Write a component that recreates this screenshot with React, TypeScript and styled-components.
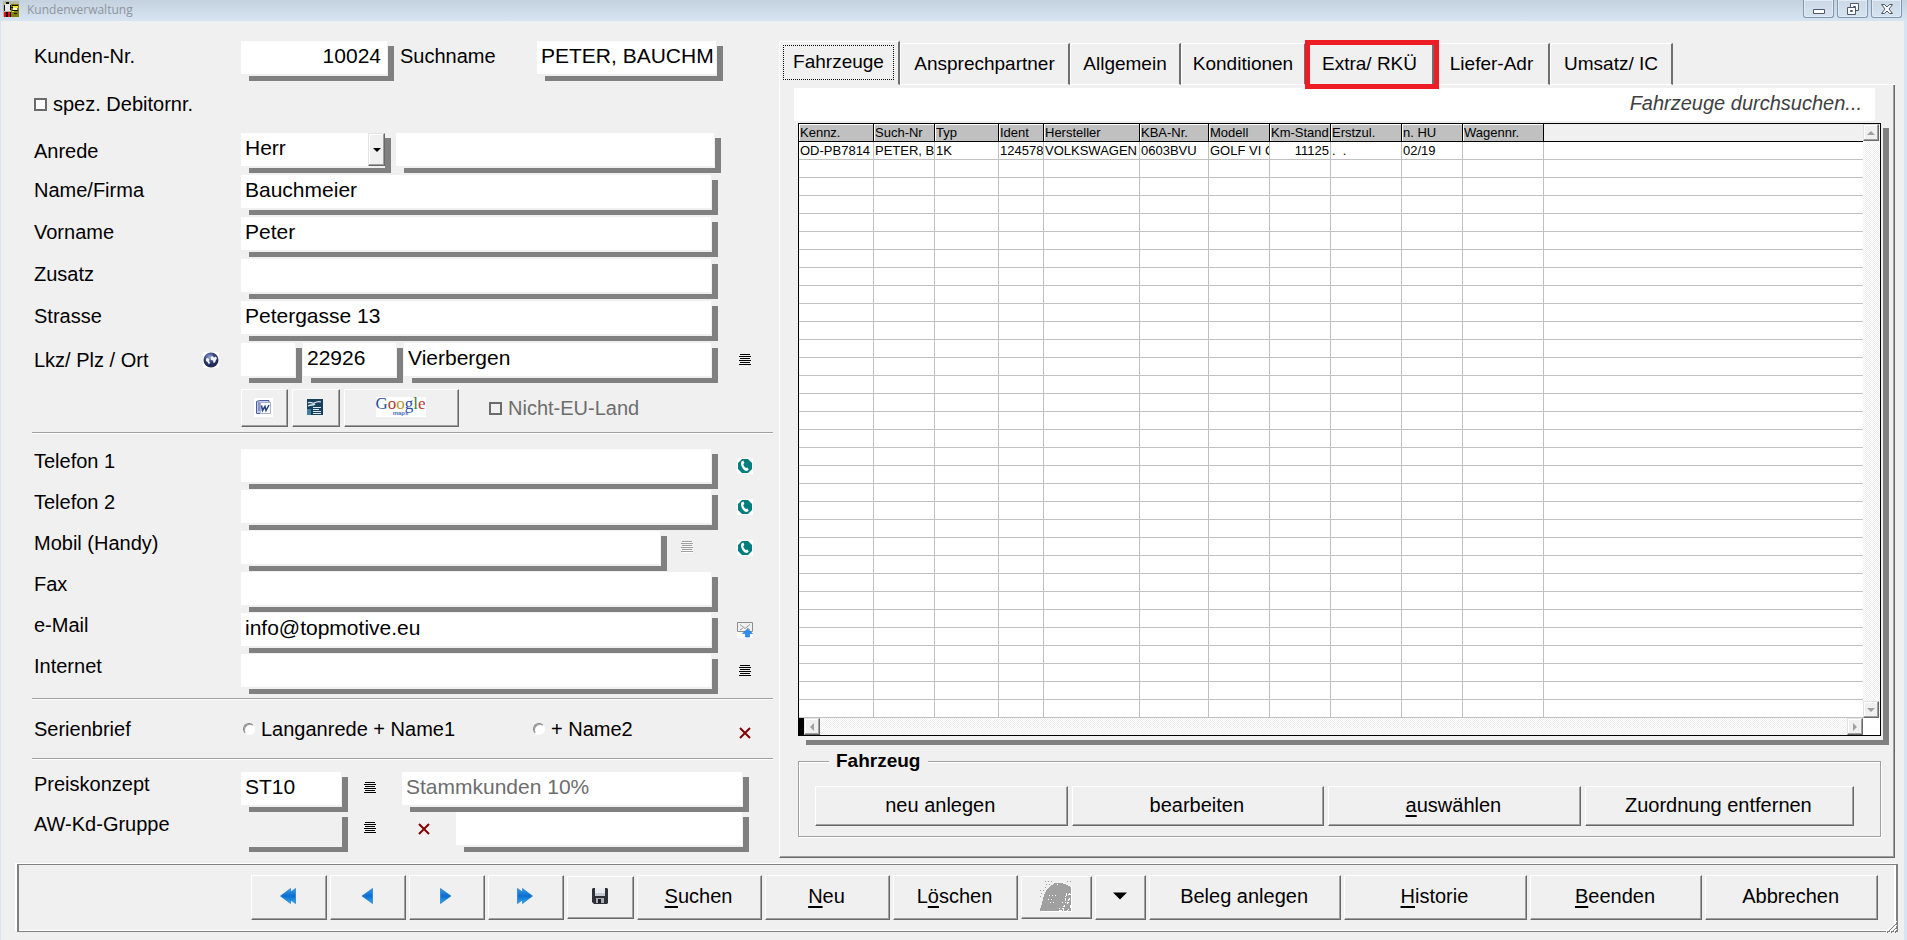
import React from "react";
import styled, { createGlobalStyle, css } from "styled-components";

const FACE = "#f0f0f0";
const SHADOW = "#808080";

const GlobalStyle = createGlobalStyle`
  * { box-sizing: border-box; }
  body {
    margin: 0;
    background: ${FACE};
    color: #000;
    font-family: "Liberation Sans", Arial, sans-serif;
    font-size: 20px;
    line-height: 24px;
  }
  button, input, select { font-family: inherit; color: inherit; margin: 0; border-radius: 0; }
  svg { display: block; flex: none; }
`;

/* ---------- window frame ---------- */

const Window = styled.div`
  display: flex;
  flex-direction: column;
  min-height: 100vh;
  min-width: 1700px;
  background: ${FACE};
  border-left: 1px solid #d7e4f2;
  border-right: 3px solid #d7e4f2;
`;

const TitleBar = styled.header`
  display: flex;
  align-items: flex-start;
  height: 21px;
  margin: 0 -3px 0 -1px;
  padding: 0 5px 0 3px;
  background: linear-gradient(#c4d1de, #d7e4f2);
`;

const TitleText = styled.h1`
  flex: 1;
  margin: 0;
  padding-left: 8px;
  font: 12px/20px "Open Sans", "Noto Sans", sans-serif;
  color: #8f959c;
`;

const CaptionButtons = styled.div`
  display: flex;
  gap: 3px;
`;

const CaptionButton = styled.button`
  display: grid;
  place-items: center;
  width: 31px;
  height: 18px;
  padding: 0;
  border: 1px solid #8496ad;
  border-top: 0;
  border-radius: 0 0 3px 3px;
  background: linear-gradient(#cbd8e6, #d5e2f0);
  box-shadow: inset 0 0 0 1px #e2ecf6;
`;

const Main = styled.main`
  display: flex;
  padding: 20px 9px 0 31px;
`;

/* ---------- shared controls ---------- */

const FieldBox = styled.div<{ $w?: number }>`
  position: relative;
  flex: none;
  width: ${(p) => (p.$w ? `${p.$w}px` : "100%")};
  height: 40px;
  padding: 0 7px 7px 0;
  background:
    linear-gradient(${SHADOW}, ${SHADOW}) right bottom / 6px calc(100% - 5px) no-repeat,
    linear-gradient(${SHADOW}, ${SHADOW}) right bottom / calc(100% - 8px) 5px no-repeat;
`;

const controlText = css`
  display: block;
  width: 100%;
  height: 33px;
  padding: 0 3px 4px 4px;
  border: 0;
  outline: 0;
  background: #fff;
  font-size: 21px;
`;

const TextInput = styled.input<{ $right?: boolean; $flat?: boolean }>`
  ${controlText}
  text-align: ${(p) => (p.$right ? "right" : "left")};
  ${(p) => p.$flat && `background: ${FACE};`}
  ${(p) => p.$right && "padding-right: 6px;"}
  &:disabled { color: #6d6d6d; }
`;

const SelectInput = styled.select`
  ${controlText}
  appearance: none;
`;

const SelectArrow = styled.span`
  position: absolute;
  top: 0;
  right: 6px;
  display: grid;
  place-items: center;
  width: 17px;
  height: 33px;
  background: ${FACE};
  border: 1px solid;
  border-color: #e3e3e3 #696969 #696969 #e3e3e3;
  box-shadow: inset -1px -1px #a0a0a0, inset 1px 1px #fff;
  pointer-events: none;
`;

const PushButton = styled.button<{ $w?: number; $grow?: number; $h?: number }>`
  display: flex;
  align-items: center;
  justify-content: center;
  height: ${(p) => p.$h ?? 45}px;
  padding: 0 2px 2px 0;
  ${(p) => (p.$grow ? `flex: ${p.$grow} 1 0;` : `flex: none; width: ${p.$w}px;`)}
  border: 1px solid;
  border-color: #fff #696969 #696969 #fff;
  background: ${FACE};
  box-shadow: inset -1px -1px #a0a0a0;
  font-size: 20px;
  line-height: 24px;
  white-space: pre;
  u { text-underline-offset: 3px; }
`;

const IconButton = styled.button`
  display: grid;
  place-items: center;
  padding: 0;
  border: 0;
  background: none;
`;

/* ---------- customer form ---------- */

const FormPanel = styled.section`
  flex: none;
  width: 747px;
  padding-right: 6px;
`;

const Divider = styled.hr<{ $before?: number; $after?: number }>`
  height: 2px;
  margin: ${(p) => p.$before ?? 0}px 0 ${(p) => p.$after ?? 0}px;
  border: 0;
  border-top: 1px solid #a0a0a0;
  background: #fff;
`;

const Group = styled.div<{ $gap?: number }>`
  display: flex;
  flex-direction: column;
  gap: ${(p) => p.$gap ?? 0}px;
`;

const Row = styled.div<{ $drop?: number; $wide?: boolean }>`
  display: grid;
  grid-template-columns: ${(p) => (p.$wide ? "207px 1fr" : "207px 477px 54px")};
  align-items: start;
  padding-left: 2px;
  & > :first-child { padding-top: ${(p) => p.$drop ?? 0}px; }
`;

const LabelCell = styled.div`
  display: flex;
  align-items: center;
  justify-content: space-between;
  padding-right: 22px;
`;

const Controls = styled.div<{ $gap?: number }>`
  display: flex;
  align-items: flex-start;
  gap: ${(p) => p.$gap ?? 0}px;
`;

const Slot = styled.div<{ $w?: number; $h?: number; $after?: number }>`
  display: grid;
  place-items: center;
  flex: none;
  width: ${(p) => (p.$w ? `${p.$w}px` : "auto")};
  height: ${(p) => p.$h ?? 34}px;
  margin-right: ${(p) => p.$after ?? 0}px;
`;

const ClearSlot = styled(Slot)`
  align-self: end;
  height: 50px;
`;

const InlineLabel = styled.label`
  width: 143px;
  padding: 3px 0 0 6px;
`;

const CheckLabel = styled.label<{ $dim?: boolean }>`
  display: flex;
  align-items: center;
  gap: 6px;
  color: ${(p) => (p.$dim ? "#6d6d6d" : "inherit")};
`;

const CheckRow = styled.div`
  display: flex;
  align-items: center;
  height: 52px;
  padding: 0 0 6px 2px;
`;

const CheckBox = styled.input.attrs({ type: "checkbox" })`
  appearance: none;
  width: 13px;
  height: 13px;
  border: 2px solid #6b6b6b;
  background: #fff;
  &:disabled { background: ${FACE}; }
`;

const Radio = styled.input.attrs({ type: "radio" })`
  appearance: none;
  width: 12px;
  height: 12px;
  border: 1px solid;
  border-color: #808080 #fff #fff #808080;
  border-radius: 50%;
  background: #fff;
  box-shadow: inset 1px 1px #a0a0a0;
`;

const ToolRow = styled.div`
  display: flex;
  align-items: center;
  gap: 4px;
  padding: 6px 0 0 209px;
`;

const ToolCheck = styled.div`
  padding-left: 26px;
`;

const SerialRow = styled.div`
  display: grid;
  grid-template-columns: 209px 290px 185px 54px;
  align-items: center;
  height: 58px;
  padding-left: 2px;
`;

const GoogleMark = styled.span`
  display: flex;
  flex-direction: column;
  align-items: center;
  width: 50px;
  height: 20px;
  background: #fff;
  font: 17px/14px "Liberation Serif", serif;
`;

const Letter = styled.span<{ $c: string }>`
  color: ${(p) => p.$c};
`;

const MapsMark = styled.small`
  font: bold 6px/4px "Liberation Sans", sans-serif;
  color: #4a6fb5;
`;

/* ---------- vehicle tabs ---------- */

const TabArea = styled.section`
  flex: 1;
  min-width: 0;
`;

const TabList = styled.div`
  display: flex;
  align-items: flex-end;
  height: 44px;
`;

const Tab = styled.button<{ $w: number; $active?: boolean; $marked?: boolean }>`
  position: relative;
  width: ${(p) => p.$w}px;
  height: ${(p) => (p.$active ? 44 : 42)}px;
  padding: ${(p) => (p.$active ? "3px 4px 4px 3px" : "0")};
  border: 1px solid #fff;
  border-right: 2px solid #6f6f6f;
  border-bottom-color: ${(p) => (p.$active ? FACE : "#fff")};
  border-radius: 3px 0 0 0;
  background: ${FACE};
  font-size: 19px;
  line-height: 24px;
  white-space: nowrap;
  ${(p) =>
    p.$marked &&
    css`
      &::after {
        content: "";
        position: absolute;
        z-index: 1;
        inset: -4px -7px -5px -2px;
        border: 5px solid #ee1c24;
      }
    `}
`;

const FocusRing = styled.span`
  display: block;
  height: 35px;
  padding-top: 4px;
  border: 1px dotted #000;
`;

const TabFill = styled.div`
  flex: 1;
  border-bottom: 1px solid #fff;
`;

const TabBody = styled.div`
  padding: 3px 5px 20px 14px;
  border: 1px solid;
  border-width: 0 1px 1px;
  border-color: #fff #696969 #696969 #fff;
  box-shadow: inset -1px -1px #a0a0a0;
`;

const SearchInput = styled.input`
  display: block;
  width: calc(100% - 14px);
  height: 33px;
  padding: 0 13px 2px;
  border: 0;
  font-size: 20px;
  font-style: italic;
  text-align: right;
  &::placeholder { color: #404040; opacity: 1; }
`;

const GridShadow = styled.div`
  margin: 2px 0 0 4px;
  padding: 0 8px 9px 0;
  background:
    linear-gradient(${SHADOW}, ${SHADOW}) right bottom / 6px calc(100% - 5px) no-repeat,
    linear-gradient(${SHADOW}, ${SHADOW}) right bottom / calc(100% - 8px) 5px no-repeat;
`;

const GridFrame = styled.div`
  display: grid;
  grid-template-columns: minmax(0, 1fr) 17px;
  border: 1px solid #000;
  background: #fff;
`;

const DataTable = styled.table`
  width: 100%;
  table-layout: fixed;
  border-collapse: separate;
  border-spacing: 0;
  font-size: 13px;
  line-height: 17px;
`;

const HeadCell = styled.th<{ $blank?: boolean }>`
  height: 18px;
  padding: 0 1px;
  overflow: hidden;
  border-bottom: 1px solid #000;
  ${(p) =>
    p.$blank
      ? `background: ${FACE};`
      : "border-right: 1px solid #000; background: #c0c0c0; box-shadow: inset 1px 1px #fff;"}
  font-weight: 400;
  text-align: left;
  white-space: nowrap;
`;

const Cell = styled.td<{ $right?: boolean; $last?: boolean }>`
  height: 18px;
  padding: 0 1px;
  overflow: hidden;
  border-bottom: 1px solid #c0c0c0;
  ${(p) => !p.$last && "border-right: 1px solid #c0c0c0;"}
  text-align: ${(p) => (p.$right ? "right" : "left")};
  white-space: pre;
`;

const dither = css`
  background: repeating-conic-gradient(#fff 0 25%, #efefef 0 50%) 0 0 / 2px 2px;
`;

const VScroll = styled.div`
  display: flex;
  flex-direction: column;
  justify-content: space-between;
  padding-right: 1px;
  ${dither}
`;

const HScroll = styled.div`
  display: flex;
  justify-content: space-between;
  height: 17px;
  border-left: 5px solid #000;
  ${dither}
`;

const ScrollButton = styled.button`
  display: grid;
  place-items: center;
  width: 16px;
  height: 17px;
  padding: 0;
  border: 1px solid;
  border-color: #e3e3e3 #696969 #696969 #e3e3e3;
  background: ${FACE};
  box-shadow: inset -1px -1px #a0a0a0, inset 1px 1px #fff;
`;

const VehicleActions = styled.fieldset`
  display: flex;
  gap: 4px;
  margin: 4px 8px 0 4px;
  padding: 13px 26px 10px 16px;
  border: 1px solid #a0a0a0;
  box-shadow: 1px 1px #fff, inset 1px 1px #fff;
  min-width: 0;
`;

const ActionsLegend = styled.legend`
  margin-left: 14px;
  padding: 0 8px 0 7px;
  background: ${FACE};
  font-size: 19px;
  font-weight: 700;
`;

/* ---------- command bar ---------- */

const CommandBar = styled.footer`
  position: relative;
  display: flex;
  align-items: center;
  gap: 3px;
  margin: 6px 6px 8px 16px;
  height: 68px;
  padding: 0 18px 2px 232px;
  border: 1px solid #808080;
  border-width: 1px 2px;
  box-shadow: -2px -1px #fff, inset -2px -1px #fff;
`;

const Grip = styled.span`
  position: absolute;
  right: -2px;
  bottom: -2px;
`;

/* ---------- icons ---------- */

const ListIcon = ({ dim }: { dim?: boolean }) => (
  <svg width="12" height="12" shapeRendering="crispEdges">
    <g fill={dim ? "#fff" : "none"}>
      <path d="M1 1h12v1H1zM1 5h12v1H1zM1 9h12v1H1zM1 11h12v1H1z" />
    </g>
    <path
      fill={dim ? "#a0a0a0" : "#000"}
      d="M1 0h10v1H1zM0 2h12v1H0zM1 4h10v1H1zM0 6h12v1H0zM1 8h10v1H1zM0 10h12v1H0z"
    />
  </svg>
);

const PhoneIcon = () => (
  <svg width="16" height="16">
    <path fill="#fff" d="M0 0h16v16H0z" />
    <path fill="#007d7d" d="M5 1h6l4 4v6l-4 4H5l-4-4V5z" />
    <path
      fill="#fff"
      d="M4.600 3.200l1.800-.7 1 2.500-1.100 1.100c.2 1.700 1.200 3.200 2.700 4l1.300-.6 1.500 2-1.300 1.300c-1.100.5-3-.2-4.500-2.100-1.800-2.300-2.700-5.600-1.400-7.500z"
    />
  </svg>
);

const MailIcon = () => (
  <svg width="16" height="16">
    <path fill="#fff" d="M0 0h16v16H0z" />
    <path fill="#f1f1f1" stroke="#8c8c8c" d="M.5.500h15v9H.5z" />
    <path fill="none" stroke="#9a9a9a" d="M3 2.500l5 4 5-4M3 8l3-2M13 8l-3-2" />
    <path fill="#2f8ff0" stroke="#1a6fd0" strokeWidth=".6" d="M10.500 7l5 4.500h-3V15h-4v-3.500h-3z" />
  </svg>
);

const CrossIcon = () => (
  <svg width="12" height="12">
    <path stroke="#850000" strokeWidth="2" d="M1 1l10 10M11 1L1 11" />
  </svg>
);

const GlobeIcon = () => (
  <svg width="16" height="16">
    <defs>
      <radialGradient id="globe" cx=".4" cy=".3">
        <stop offset="0" stopColor="#97a4cf" />
        <stop offset=".6" stopColor="#3d4d88" />
        <stop offset="1" stopColor="#232d5c" />
      </radialGradient>
    </defs>
    <path fill="#fff" d="M0 0h16v16H0z" />
    <circle cx="8" cy="8" r="7.500" fill="url(#globe)" />
    <path
      fill="#f2f4fb"
      d="M3 6.500l2-.5 1.500 1.500L6 9l1 1.500-1 2-1.500-2.500L3 9zM7.500 5l2-1 1.500 1.500 2-1 1 2-1 1.500-1 2.500-1.500.5-.5-2.500-2-.5z"
    />
  </svg>
);

const WordIcon = () => (
  <svg width="19" height="19">
    <path fill="#fff" d="M0 0h19v19H0z" />
    <path fill="#c3cbee" d="M2 4l4-2h9v3H6v11H2z" />
    <path fill="none" stroke="#4b5ca0" d="M2.500 15.500v-12l3-1h9.500v2M3 15.500h3M5 4v9" />
    <path fill="#fafbff" stroke="#aab0c8" d="M6.500 4.500h10v11h-10z" />
    <path fill="none" stroke="#26417e" strokeWidth="1.500" d="M7.500 7.500l1 5 2.500-4 1 4 3-5.500" />
  </svg>
);

const WriterIcon = () => (
  <svg width="16" height="16">
    <path fill="#17405c" d="M0 0h16v16H0z" />
    <path fill="none" stroke="#d9e8f2" strokeWidth="1.300" d="M1 4c3-2 4 1 6 0s5-2 7-1M1 7c3-2 5 0 7-2" />
    <path stroke="#d9e8f2" d="M6 8.500h8M6 10.500h6M6 12.500h8M6 14.500h8" />
    <path fill="#3f7fa6" d="M0 10h4v6H0z" />
  </svg>
);

const AppIcon = () => (
  <svg width="16" height="17" shapeRendering="crispEdges">
    <path fill="#b8b8a0" d="M0 1h16v16H0z" />
    <path fill="#808000" d="M8 4h8v13H8z" />
    <path fill="#111" d="M3 2h3v2H3zM1 5h1v6H1zM7 5h1v5H7zM9 5h6v1H9zM8 7h2v1H8zM9 10h6v1H9zM11 13h3v1h-3z" />
    <path fill="#f4e820" d="M10 6h5v2h-5zM9 11h2v1H9z" />
    <path fill="#e8e8e8" d="M2 4h5v7H2z" />
    <path fill="#fff" d="M10 8h4v2h-4z" />
    <path fill="#e01010" d="M1 12h2v5H1zM5 12h2v5H5z" />
    <path fill="#200000" d="M3 12h2v5H3zM7 12h1v5H7z" />
  </svg>
);

const BlueArrows = ({ back, twice }: { back?: boolean; twice?: boolean }) => (
  <svg width={twice ? 16 : 12} height="16" viewBox={twice ? "0 0 16 16" : "0 0 12 16"}>
    <defs>
      <linearGradient id="arrow" x1="0" y1="0" x2="0" y2="1">
        <stop offset="0" stopColor="#3aa0ee" />
        <stop offset=".5" stopColor="#0a6cd0" />
        <stop offset="1" stopColor="#2fb0f5" />
      </linearGradient>
    </defs>
    <g
      fill="url(#arrow)"
      stroke="#1c78cc"
      strokeWidth=".7"
      transform={back ? `matrix(-1 0 0 1 ${twice ? 16 : 12} 0)` : undefined}
    >
      <path d="M.5.500L11 8 .5 15.500z" />
      {twice && <path d="M5.500.500L15.500 8l-10 7.500z" />}
    </g>
  </svg>
);

const DiskIcon = () => (
  <svg width="16" height="16">
    <path fill="#2d3036" d="M1 0h14l1 1v14l-1 1H2l-2-2V1z" />
    <path fill="#e8ecf0" d="M3 0h10v8H3z" />
    <path fill="#c4cbd3" d="M3 5h10v3H3z" />
    <path fill="#a9adb3" d="M4 10h8v5H4z" />
    <path fill="#1b1d20" d="M6 11h3v4H6z" />
  </svg>
);

const PhotoIcon = () => (
  <svg width="32" height="31" shapeRendering="crispEdges">
    <path fill="#fff" d="M31 5h1v26H1v-1h30z" />
    <path
      fill="#a0a0a0"
      d="M0 30v-2l2-5 1-6 2-5 3-5 4-3 3-2h6l6 2 4 2v24z"
    />
    <path
      stroke="#a0a0a0"
      strokeDasharray="1 2"
      d="M5 .5h7M6 3.500h5M5 6.500h3M0 9.500h5M1 12.500h2M0 15.500h2M27 .5h4"
    />
    <path
      stroke="#fff"
      strokeDasharray="1 2"
      d="M9 14.500h7M8 18.500h4M10 21.500h4M17 3.500h3M26 12.500h5M22 21.500h7M19 27.500h6"
    />
    <path
      fill="none"
      stroke="#fff"
      strokeDasharray="3 1"
      d="M31 13.500h-4l-2 3v4M30 17.500l-3 3v3M19 29.500h4v-3l2-2M27 29.500l3-2v-4"
    />
  </svg>
);

const Triangle = ({ dir, color = "#000", size = 4 }: { dir: string; color?: string; size?: number }) => {
  const turn: Record<string, number> = { down: 0, left: 90, up: 180, right: 270 };
  const s = size * 2;
  return (
    <svg width={s} height={s}>
      <path
        fill={color}
        transform={`rotate(${turn[dir]} ${size} ${size})`}
        d={`M0 ${size / 2}H${s}L${size} ${size * 1.5}z`}
      />
    </svg>
  );
};

/* ---------- data ---------- */

const contactRows = [
  { id: "tel1", label: "Telefon 1", value: "", icon: <PhoneIcon />, action: "Telefon 1 anrufen" },
  { id: "tel2", label: "Telefon 2", value: "", icon: <PhoneIcon />, action: "Telefon 2 anrufen" },
  { id: "mobil", label: "Mobil (Handy)", value: "", icon: <PhoneIcon />, action: "Mobil anrufen", width: 426 },
  { id: "fax", label: "Fax", value: "" },
  { id: "mail", label: "e-Mail", value: "info@topmotive.eu", icon: <MailIcon />, action: "e-Mail senden" },
  { id: "web", label: "Internet", value: "", icon: <ListIcon />, action: "Internet-Liste" },
];

const nameRows = [
  { id: "name", label: "Name/Firma", value: "Bauchmeier" },
  { id: "vorname", label: "Vorname", value: "Peter" },
  { id: "zusatz", label: "Zusatz", value: "" },
  { id: "strasse", label: "Strasse", value: "Petergasse 13" },
];

const tabs = [
  { title: "Fahrzeuge", width: 121 },
  { title: "Ansprechpartner", width: 170 },
  { title: "Allgemein", width: 111 },
  { title: "Konditionen", width: 125 },
  { title: "Extra/ RKÜ", width: 128 },
  { title: "Liefer-Adr", width: 116 },
  { title: "Umsatz/ IC", width: 123 },
];

const columns = [
  { title: "Kennz.", width: 75, value: "OD-PB7814" },
  { title: "Such-Nr", width: 61, value: "PETER, B" },
  { title: "Typ", width: 64, value: "1K" },
  { title: "Ident", width: 45, value: "124578" },
  { title: "Hersteller", width: 96, value: "VOLKSWAGEN" },
  { title: "KBA-Nr.", width: 69, value: "0603BVU" },
  { title: "Modell", width: 61, value: "GOLF VI C" },
  { title: "Km-Stand", width: 61, value: "11125", right: true },
  { title: "Erstzul.", width: 71, value: ".  ." },
  { title: "n. HU", width: 61, value: "02/19" },
  { title: "Wagennr.", width: 81, value: "" },
];

const ROW_COUNT = 32;

/* ---------- sections ---------- */

const CustomerForm = () => (
  <FormPanel>
    <Row $drop={3} $wide>
      <label htmlFor="kdnr">Kunden-Nr.</label>
      <Controls>
        <FieldBox $w={153}>
          <TextInput id="kdnr" defaultValue="10024" $right />
        </FieldBox>
        <InlineLabel htmlFor="such">Suchname</InlineLabel>
        <FieldBox $w={186}>
          <TextInput id="such" defaultValue="PETER, BAUCHMEIER" />
        </FieldBox>
      </Controls>
    </Row>
    <CheckRow>
      <CheckLabel>
        <CheckBox />
        spez. Debitornr.
      </CheckLabel>
    </CheckRow>

    <Group $gap={2}>
      <Row $drop={6} $wide>
        <label htmlFor="anrede">Anrede</label>
        <Controls $gap={5}>
          <FieldBox $w={150}>
            <SelectInput id="anrede" defaultValue="Herr">
              <option>Herr</option>
              <option>Frau</option>
              <option>Firma</option>
            </SelectInput>
            <SelectArrow>
              <Triangle dir="down" size={4} />
            </SelectArrow>
          </FieldBox>
          <FieldBox $w={325}>
            <TextInput aria-label="Anrede Zusatz" />
          </FieldBox>
        </Controls>
      </Row>
      {nameRows.map((r) => (
        <Row key={r.id} $drop={3}>
          <label htmlFor={r.id}>{r.label}</label>
          <FieldBox $w={477}>
            <TextInput id={r.id} defaultValue={r.value} />
          </FieldBox>
        </Row>
      ))}
      <Row $drop={5}>
        <LabelCell>
          <label htmlFor="plz">Lkz/ Plz / Ort</label>
          <IconButton aria-label="Karte">
            <GlobeIcon />
          </IconButton>
        </LabelCell>
        <Controls $gap={1}>
          <FieldBox $w={61}>
            <TextInput aria-label="Lkz" />
          </FieldBox>
          <FieldBox $w={100}>
            <TextInput id="plz" defaultValue="22926" />
          </FieldBox>
          <FieldBox $w={314}>
            <TextInput aria-label="Ort" defaultValue="Vierbergen" />
          </FieldBox>
        </Controls>
        <Slot>
          <IconButton aria-label="Ortsliste">
            <ListIcon />
          </IconButton>
        </Slot>
      </Row>
    </Group>

    <ToolRow>
      <PushButton $w={47} $h={38} aria-label="Word">
        <WordIcon />
      </PushButton>
      <PushButton $w={48} $h={38} aria-label="Writer">
        <WriterIcon />
      </PushButton>
      <PushButton $w={115} $h={38}>
        <GoogleMark>
          <span>
            <Letter $c="#2c4f9e">G</Letter>
            <Letter $c="#b03a2e">o</Letter>
            <Letter $c="#b89a2c">o</Letter>
            <Letter $c="#2c4f9e">g</Letter>
            <Letter $c="#3b7d3a">l</Letter>
            <Letter $c="#b03a2e">e</Letter>
          </span>
          <MapsMark>maps</MapsMark>
        </GoogleMark>
      </PushButton>
      <ToolCheck>
        <CheckLabel $dim>
          <CheckBox disabled />
          Nicht-EU-Land
        </CheckLabel>
      </ToolCheck>
    </ToolRow>

    <Divider $before={5} $after={15} />

    <Group $gap={1}>
      {contactRows.map((r) => (
        <Row key={r.id}>
          <label htmlFor={r.id}>{r.label}</label>
          <Controls>
            <FieldBox $w={r.width ?? 477}>
              <TextInput id={r.id} defaultValue={r.value} />
            </FieldBox>
            {r.width && (
              <Slot $w={40} $h={32}>
                <ListIcon dim />
              </Slot>
            )}
          </Controls>
          {r.icon && (
            <Slot>
              <IconButton aria-label={r.action}>{r.icon}</IconButton>
            </Slot>
          )}
        </Row>
      ))}
    </Group>

    <Divider $before={4} />

    <SerialRow>
      <span>Serienbrief</span>
      <CheckLabel>
        <Radio name="serie" />
        Langanrede + Name1
      </CheckLabel>
      <CheckLabel>
        <Radio name="serie" />+ Name2
      </CheckLabel>
      <ClearSlot>
        <IconButton aria-label="Auswahl löschen">
          <CrossIcon />
        </IconButton>
      </ClearSlot>
    </SerialRow>

    <Divider $after={12} />

    <Row $wide>
      <label htmlFor="preis">Preiskonzept</label>
      <Controls>
        <FieldBox $w={107}>
          <TextInput id="preis" defaultValue="ST10" />
        </FieldBox>
        <Slot $w={44} $h={32} $after={10}>
          <IconButton aria-label="Preiskonzepte">
            <ListIcon />
          </IconButton>
        </Slot>
        <FieldBox $w={347}>
          <TextInput aria-label="Preiskonzept Text" defaultValue="Stammkunden 10%" disabled />
        </FieldBox>
      </Controls>
    </Row>
    <Row $wide>
      <label htmlFor="awgruppe">AW-Kd-Gruppe</label>
      <Controls>
        <FieldBox $w={107}>
          <TextInput id="awgruppe" $flat />
        </FieldBox>
        <Slot $w={44} $h={32}>
          <IconButton aria-label="Gruppen">
            <ListIcon />
          </IconButton>
        </Slot>
        <Slot $w={64}>
          <IconButton aria-label="Gruppe entfernen">
            <CrossIcon />
          </IconButton>
        </Slot>
        <FieldBox $w={293}>
          <TextInput aria-label="AW-Kd-Gruppe Text" />
        </FieldBox>
      </Controls>
    </Row>
  </FormPanel>
);

const VehicleGrid = () => (
  <GridShadow>
    <GridFrame>
      <DataTable>
        <colgroup>
          {columns.map((c) => (
            <col key={c.title} width={c.width} />
          ))}
          <col />
        </colgroup>
        <thead>
          <tr>
            {columns.map((c) => (
              <HeadCell key={c.title}>{c.title}</HeadCell>
            ))}
            <HeadCell $blank />
          </tr>
        </thead>
        <tbody>
          {Array.from({ length: ROW_COUNT }, (_, i) => (
            <tr key={i}>
              {columns.map((c) => (
                <Cell key={c.title} $right={c.right}>
                  {i === 0 ? c.value : ""}
                </Cell>
              ))}
              <Cell $last />
            </tr>
          ))}
        </tbody>
      </DataTable>
      <VScroll>
        <ScrollButton aria-label="Nach oben">
          <Triangle dir="up" color="#a0a0a0" />
        </ScrollButton>
        <ScrollButton aria-label="Nach unten">
          <Triangle dir="down" color="#a0a0a0" />
        </ScrollButton>
      </VScroll>
      <HScroll>
        <ScrollButton aria-label="Nach links">
          <Triangle dir="left" color="#a0a0a0" />
        </ScrollButton>
        <ScrollButton aria-label="Nach rechts">
          <Triangle dir="right" color="#a0a0a0" />
        </ScrollButton>
      </HScroll>
    </GridFrame>
  </GridShadow>
);

const VehicleTabs = () => (
  <TabArea>
    <TabList role="tablist">
      {tabs.map((t, i) => (
        <Tab
          key={t.title}
          role="tab"
          aria-selected={i === 0}
          $w={t.width}
          $active={i === 0}
          $marked={t.title === "Extra/ RKÜ"}
        >
          {i === 0 ? <FocusRing>{t.title}</FocusRing> : t.title}
        </Tab>
      ))}
      <TabFill />
    </TabList>
    <TabBody role="tabpanel">
      <SearchInput aria-label="Fahrzeuge durchsuchen" placeholder="Fahrzeuge durchsuchen..." />
      <VehicleGrid />
      <VehicleActions>
        <ActionsLegend>Fahrzeug</ActionsLegend>
        <PushButton $grow={252} $h={40}>neu anlegen</PushButton>
        <PushButton $grow={252} $h={40}>bearbeiten</PushButton>
        <PushButton $grow={252} $h={40}>
          <u>a</u>uswählen
        </PushButton>
        <PushButton $grow={269} $h={40}>Zuordnung entfernen</PushButton>
      </VehicleActions>
    </TabBody>
  </TabArea>
);

const Commands = () => (
  <CommandBar>
    <PushButton $w={76} aria-label="Erster">
      <BlueArrows back twice />
    </PushButton>
    <PushButton $w={76} aria-label="Zurück">
      <BlueArrows back />
    </PushButton>
    <PushButton $w={76} aria-label="Weiter">
      <BlueArrows />
    </PushButton>
    <PushButton $w={76} aria-label="Letzter">
      <BlueArrows twice />
    </PushButton>
    <PushButton $w={67} $h={43} aria-label="Speichern">
      <DiskIcon />
    </PushButton>
    <PushButton $w={125}>
      <u>S</u>uchen
    </PushButton>
    <PushButton $w={125}>
      <u>N</u>eu
    </PushButton>
    <PushButton $w={125}>
      L<u>ö</u>schen
    </PushButton>
    <PushButton $w={71} $h={43} aria-label="Foto">
      <PhotoIcon />
    </PushButton>
    <PushButton $w={51} aria-label="Weitere Aktionen">
      <Triangle dir="down" size={7} />
    </PushButton>
    <PushButton $grow={193}>Beleg anlegen</PushButton>
    <PushButton $grow={183}>
      <u>H</u>istorie
    </PushButton>
    <PushButton $grow={173}>
      <u>B</u>eenden
    </PushButton>
    <PushButton $grow={173}>Abbrechen</PushButton>
    <Grip>
      <svg width="12" height="12">
        <path stroke="#fff" d="M0 11L11 0M4 11L11 4M8 11L11 8" />
        <path stroke="#808080" d="M1 12L12 1M5 12L12 5M9 12L12 9" />
      </svg>
    </Grip>
  </CommandBar>
);

export default function App() {
  return (
    <>
      <GlobalStyle />
      <Window>
        <TitleBar>
          <AppIcon />
          <TitleText>Kundenverwaltung</TitleText>
          <CaptionButtons>
            <CaptionButton aria-label="Minimieren">
              <svg width="12" height="12">
                <path fill="#fff" stroke="#50596a" d="M.5 6.500h11v4H.5z" />
              </svg>
            </CaptionButton>
            <CaptionButton aria-label="Wiederherstellen">
              <svg width="12" height="12">
                <path fill="#fff" stroke="#50596a" d="M3.500.500h8v7h-8zM6.500 3.500h2v2h-2z" />
                <path fill="#fff" stroke="#50596a" d="M.5 4.500h8v7h-8zM3.500 7.500h2v1h-2z" />
              </svg>
            </CaptionButton>
            <CaptionButton aria-label="Schließen">
              <svg width="12" height="12">
                <path
                  fill="#fff"
                  stroke="#50596a"
                  d="M.5 1.500h3L6 4l2.500-2.500h3L8 6l3.500 4.500h-3L6 8l-2.500 2.500h-3L4 6z"
                />
              </svg>
            </CaptionButton>
          </CaptionButtons>
        </TitleBar>
        <Main>
          <CustomerForm />
          <VehicleTabs />
        </Main>
        <Commands />
      </Window>
    </>
  );
}
